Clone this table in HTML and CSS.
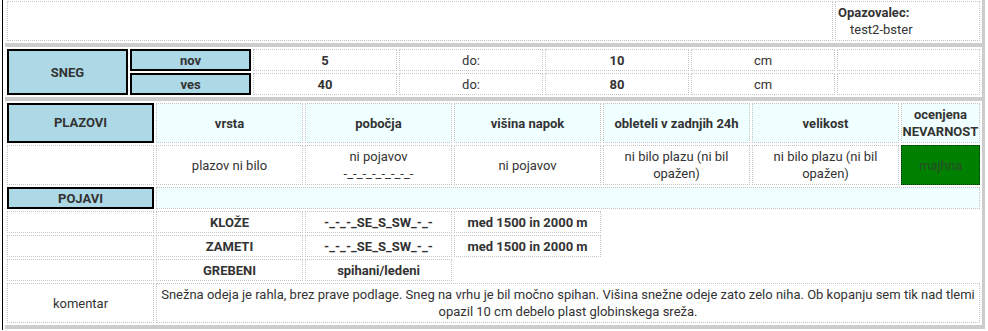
FILE: index.html
```html
<!DOCTYPE html>
<html lang="sl">
<head>
<meta charset="utf-8">
<title>Opazovanje</title>
<link rel="stylesheet" href="styles.css">
</head>
<body>
<div class="page">
  <table class="t t-top">
    <colgroup><col><col class="c-obs"></colgroup>
    <tr class="two">
      <td class="d"></td>
      <td class="d obs"><div class="obs-l">Opazovalec:</div><div class="obs-v">test2-bster</div></td>
    </tr>
  </table>

  <table class="t">
    <colgroup><col class="c121"><col class="c121"><col class="c144"><col class="c144"><col class="c144"><col class="c144"><col></colgroup>
    <tr>
      <th class="b" rowspan="2">SNEG</th>
      <th class="b">nov</th>
      <td class="d s">5</td>
      <td class="d">do:</td>
      <td class="d s">10</td>
      <td class="d">cm</td>
      <td class="d"></td>
    </tr>
    <tr>
      <th class="b">ves</th>
      <td class="d s">40</td>
      <td class="d">do:</td>
      <td class="d s">80</td>
      <td class="d">cm</td>
      <td class="d"></td>
    </tr>
  </table>

  <table class="t">
    <colgroup><col class="c147"><col class="c147"><col class="c147"><col class="c147"><col class="c147"><col class="c147"><col></colgroup>
    <tr class="two">
      <th class="b">PLAZOVI</th>
      <th class="d h">vrsta</th>
      <th class="d h">pobočja</th>
      <th class="d h">višina napok</th>
      <th class="d h">obleteli v zadnjih 24h</th>
      <th class="d h">velikost</th>
      <th class="d h narrow">ocenjena NEVARNOST</th>
    </tr>
    <tr class="two">
      <td class="d"></td>
      <td class="d">plazov ni bilo</td>
      <td class="d">ni pojavov<br>-_-_-_-_-_-_-_-</td>
      <td class="d">ni pojavov</td>
      <td class="d">ni bilo plazu (ni bil opažen)</td>
      <td class="d">ni bilo plazu (ni bil opažen)</td>
      <td class="g">majhna</td>
    </tr>
    <tr>
      <th class="b">POJAVI</th>
      <td class="d h" colspan="6"></td>
    </tr>
    <tr>
      <td class="d"></td>
      <td class="d s">KLOŽE</td>
      <td class="d s">-_-_-_SE_S_SW_-_-</td>
      <td class="d s">med 1500 in 2000 m</td>
      <td colspan="3"></td>
    </tr>
    <tr>
      <td class="d"></td>
      <td class="d s">ZAMETI</td>
      <td class="d s">-_-_-_SE_S_SW_-_-</td>
      <td class="d s">med 1500 in 2000 m</td>
      <td colspan="3"></td>
    </tr>
    <tr>
      <td class="d"></td>
      <td class="d s">GREBENI</td>
      <td class="d s">spihani/ledeni</td>
      <td colspan="4"></td>
    </tr>
    <tr class="two">
      <td class="d">komentar</td>
      <td class="d" colspan="6">Snežna odeja je rahla, brez prave podlage. Sneg na vrhu je bil močno spihan. Višina snežne odeje zato zelo niha. Ob kopanju sem tik nad tlemi opazil 10 cm debelo plast globinskega sreža.</td>
    </tr>
  </table>
</div>
</body>
</html>
```

FILE: styles.css
```css
html, body {
  margin: 0;
  padding: 0;
  background: #fff;
}

.page {
  margin-left: 2px;
  border-left: 1px solid #000;
  padding-left: 2px;
  min-height: 100vh;
  box-sizing: border-box;
  font-family: Roboto, "Liberation Sans", Arial, sans-serif;
  font-size: 13px;
  line-height: 17px;
  color: #333;
}

.t {
  width: 980px;
  table-layout: fixed;
  border-collapse: separate;
  border-spacing: 2px;
  border-right: 3px solid #ccc;
  border-bottom: 4px solid #ccc;
  background: #fff;
}

.t-top {
  margin-top: -1px;
}

.c-obs { width: 145px; }
.c121 { width: 121px; }
.c144 { width: 144px; }
.c147 { width: 147px; }

.t td, .t th {
  padding: 2px 2px 1px;
  text-align: center;
  vertical-align: middle;
  font-weight: 400;
  overflow: hidden;
}

.t tr.two > td, .t tr.two > th {
  padding-bottom: 2px;
}

.t .d {
  border: 1px dotted #c4c4c4;
}

.t .b {
  background: #add8e6;
  border: 2px solid #000;
  font-weight: 700;
  padding: 1px 2px 0;
}

.t .h {
  background: #f0ffff;
  font-weight: 700;
}

.t .s {
  font-weight: 700;
}

.t .narrow {
  padding-left: 0;
  padding-right: 0;
}

.t .g {
  background: #008000;
  border: 1px dotted #003300;
  color: #2a4a2a;
}

.obs {
  text-align: left !important;
}

.obs-l {
  font-weight: 700;
}

.obs-v {
  padding-left: 12px;
}
```
